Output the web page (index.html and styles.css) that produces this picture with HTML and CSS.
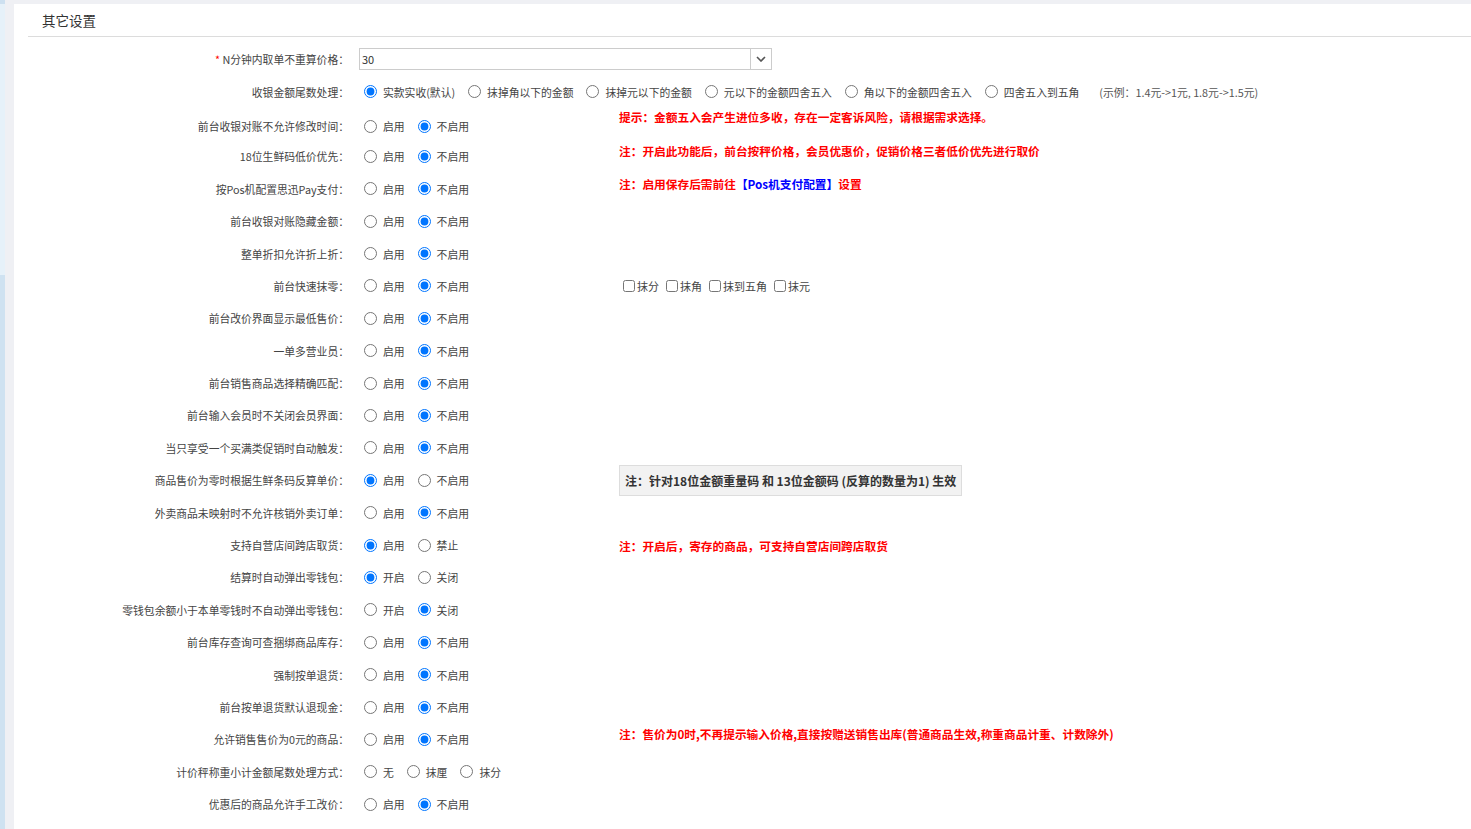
FILE: index.html
```html
<!DOCTYPE html>
<html lang="zh-CN">
<head>
    <meta charset="UTF-8">
    <meta name="viewport" content="width=device-width, initial-scale=1.0">
    <title>其它设置</title>
    <link rel="stylesheet" href="styles.css">
</head>
<body>
    <div class="layout">
        <div class="rail"></div>
        <div class="main">
            <div class="panel">
                <div class="panel-title">其它设置</div>

                <div class="form">
                    <div class="row">
                        <div class="label"><span class="star">*</span> N分钟内取单不重算价格：</div>
                        <div class="field wide">
                            <div class="select">
                                <input type="text" value="30">
                                <span class="arrow">
                                    <svg width="10" height="6" viewBox="0 0 10 6"><path d="M1 1 L5 5 L9 1" fill="none" stroke="#555" stroke-width="1.6"/></svg>
                                </span>
                            </div>
                        </div>
                    </div>

                    <div class="row">
                        <div class="label">收银金额尾数处理：</div>
                        <div class="field wide">
                            <label class="opt"><input type="radio" name="tail" checked>实款实收(默认)</label>
                            <label class="opt"><input type="radio" name="tail">抹掉角以下的金额</label>
                            <label class="opt"><input type="radio" name="tail">抹掉元以下的金额</label>
                            <label class="opt"><input type="radio" name="tail">元以下的金额四舍五入</label>
                            <label class="opt"><input type="radio" name="tail">角以下的金额四舍五入</label>
                            <label class="opt"><input type="radio" name="tail">四舍五入到五角</label>
                            <span class="sample">(示例：1.4元-&gt;1元, 1.8元-&gt;1.5元)</span>
                        </div>
                    </div>

                    <div class="row">
                        <div class="label">前台收银对账不允许修改时间：</div>
                        <div class="field">
                            <label class="opt"><input type="radio" name="r3">启用</label>
                            <label class="opt"><input type="radio" name="r3" checked>不启用</label>
                        </div>
                        <div class="note warn up-lg">提示：金额五入会产生进位多收，存在一定客诉风险，请根据需求选择。</div>
                    </div>

                    <div class="row">
                        <div class="label">18位生鲜码低价优先：</div>
                        <div class="field">
                            <label class="opt"><input type="radio" name="r4">启用</label>
                            <label class="opt"><input type="radio" name="r4" checked>不启用</label>
                        </div>
                        <div class="note warn up">注：开启此功能后，前台按秤价格，会员优惠价，促销价格三者低价优先进行取价</div>
                    </div>

                    <div class="row">
                        <div class="label">按Pos机配置思迅Pay支付：</div>
                        <div class="field">
                            <label class="opt"><input type="radio" name="r5">启用</label>
                            <label class="opt"><input type="radio" name="r5" checked>不启用</label>
                        </div>
                        <div class="note warn up">注：启用保存后需前往<span class="link">【Pos机支付配置】</span>设置</div>
                    </div>

                    <div class="row">
                        <div class="label">前台收银对账隐藏金额：</div>
                        <div class="field">
                            <label class="opt"><input type="radio" name="r6">启用</label>
                            <label class="opt"><input type="radio" name="r6" checked>不启用</label>
                        </div>
                    </div>

                    <div class="row">
                        <div class="label">整单折扣允许折上折：</div>
                        <div class="field">
                            <label class="opt"><input type="radio" name="r7">启用</label>
                            <label class="opt"><input type="radio" name="r7" checked>不启用</label>
                        </div>
                    </div>

                    <div class="row">
                        <div class="label">前台快速抹零：</div>
                        <div class="field">
                            <label class="opt"><input type="radio" name="r8">启用</label>
                            <label class="opt"><input type="radio" name="r8" checked>不启用</label>
                        </div>
                        <div class="note checks">
                            <label class="chk"><input type="checkbox">抹分</label>
                            <label class="chk"><input type="checkbox">抹角</label>
                            <label class="chk"><input type="checkbox">抹到五角</label>
                            <label class="chk"><input type="checkbox">抹元</label>
                        </div>
                    </div>

                    <div class="row">
                        <div class="label">前台改价界面显示最低售价：</div>
                        <div class="field">
                            <label class="opt"><input type="radio" name="r9">启用</label>
                            <label class="opt"><input type="radio" name="r9" checked>不启用</label>
                        </div>
                    </div>

                    <div class="row">
                        <div class="label">一单多营业员：</div>
                        <div class="field">
                            <label class="opt"><input type="radio" name="r10">启用</label>
                            <label class="opt"><input type="radio" name="r10" checked>不启用</label>
                        </div>
                    </div>

                    <div class="row">
                        <div class="label">前台销售商品选择精确匹配：</div>
                        <div class="field">
                            <label class="opt"><input type="radio" name="r11">启用</label>
                            <label class="opt"><input type="radio" name="r11" checked>不启用</label>
                        </div>
                    </div>

                    <div class="row">
                        <div class="label">前台输入会员时不关闭会员界面：</div>
                        <div class="field">
                            <label class="opt"><input type="radio" name="r12">启用</label>
                            <label class="opt"><input type="radio" name="r12" checked>不启用</label>
                        </div>
                    </div>

                    <div class="row">
                        <div class="label">当只享受一个买满类促销时自动触发：</div>
                        <div class="field">
                            <label class="opt"><input type="radio" name="r13">启用</label>
                            <label class="opt"><input type="radio" name="r13" checked>不启用</label>
                        </div>
                    </div>

                    <div class="row">
                        <div class="label">商品售价为零时根据生鲜条码反算单价：</div>
                        <div class="field">
                            <label class="opt"><input type="radio" name="r14" checked>启用</label>
                            <label class="opt"><input type="radio" name="r14">不启用</label>
                        </div>
                        <div class="note tip-box">注：针对18位金额重量码 和 13位金额码 (反算的数量为1) 生效</div>
                    </div>

                    <div class="row">
                        <div class="label">外卖商品未映射时不允许核销外卖订单：</div>
                        <div class="field">
                            <label class="opt"><input type="radio" name="r15">启用</label>
                            <label class="opt"><input type="radio" name="r15" checked>不启用</label>
                        </div>
                    </div>

                    <div class="row">
                        <div class="label">支持自营店间跨店取货：</div>
                        <div class="field">
                            <label class="opt"><input type="radio" name="r16" checked>启用</label>
                            <label class="opt"><input type="radio" name="r16">禁止</label>
                        </div>
                        <div class="note warn">注：开启后，寄存的商品，可支持自营店间跨店取货</div>
                    </div>

                    <div class="row">
                        <div class="label">结算时自动弹出零钱包：</div>
                        <div class="field">
                            <label class="opt"><input type="radio" name="r17" checked>开启</label>
                            <label class="opt"><input type="radio" name="r17">关闭</label>
                        </div>
                    </div>

                    <div class="row">
                        <div class="label">零钱包余额小于本单零钱时不自动弹出零钱包：</div>
                        <div class="field">
                            <label class="opt"><input type="radio" name="r18">开启</label>
                            <label class="opt"><input type="radio" name="r18" checked>关闭</label>
                        </div>
                    </div>

                    <div class="row">
                        <div class="label">前台库存查询可查捆绑商品库存：</div>
                        <div class="field">
                            <label class="opt"><input type="radio" name="r19">启用</label>
                            <label class="opt"><input type="radio" name="r19" checked>不启用</label>
                        </div>
                    </div>

                    <div class="row">
                        <div class="label">强制按单退货：</div>
                        <div class="field">
                            <label class="opt"><input type="radio" name="r20">启用</label>
                            <label class="opt"><input type="radio" name="r20" checked>不启用</label>
                        </div>
                    </div>

                    <div class="row">
                        <div class="label">前台按单退货默认退现金：</div>
                        <div class="field">
                            <label class="opt"><input type="radio" name="r21">启用</label>
                            <label class="opt"><input type="radio" name="r21" checked>不启用</label>
                        </div>
                    </div>

                    <div class="row">
                        <div class="label">允许销售售价为0元的商品：</div>
                        <div class="field">
                            <label class="opt"><input type="radio" name="r22">启用</label>
                            <label class="opt"><input type="radio" name="r22" checked>不启用</label>
                        </div>
                        <div class="note warn up">注：售价为0时,不再提示输入价格,直接按赠送销售出库(普通商品生效,称重商品计重、计数除外)</div>
                    </div>

                    <div class="row">
                        <div class="label">计价秤称重小计金额尾数处理方式：</div>
                        <div class="field">
                            <label class="opt"><input type="radio" name="r23">无</label>
                            <label class="opt"><input type="radio" name="r23">抹厘</label>
                            <label class="opt"><input type="radio" name="r23">抹分</label>
                        </div>
                    </div>

                    <div class="row">
                        <div class="label">优惠后的商品允许手工改价：</div>
                        <div class="field">
                            <label class="opt"><input type="radio" name="r24">启用</label>
                            <label class="opt"><input type="radio" name="r24" checked>不启用</label>
                        </div>
                    </div>
                </div>
            </div>
        </div>
    </div>
</body>
</html>
```

FILE: styles.css
```css
* {
    box-sizing: border-box;
}

html, body {
    height: 100%;
}

body {
    margin: 0;
    font-family: "Noto Sans CJK SC", "Noto Sans", sans-serif;
    color: #444;
    background-color: #eff0f4;
    overflow: hidden;
}

.layout {
    display: flex;
    height: 100%;
}

.rail {
    width: 5px;
    flex-shrink: 0;
    background: linear-gradient(#cde0f0 0, #cde0f0 4px, #e6f1f9 4px, #e6f1f9 275px, #cfe2f1 275px);
}

.main {
    flex: 1;
    padding: 4px 0 0 9px;
}

.panel {
    background-color: #fff;
    height: 100%;
    padding-left: 14px;
}

.panel-title {
    height: 33px;
    line-height: 33px;
    padding-left: 14px;
    font-size: 13.5px;
    color: #333;
    border-bottom: 1px solid #dcdcdc;
}

.form {
    padding-top: 6px;
}

/* label | options | note */
.row {
    display: grid;
    grid-template-columns: 321px 247px 1fr;
    column-gap: 10px;
    align-items: center;
    height: 32.4px;
}

.label {
    text-align: right;
    font-size: 10.8px;
    white-space: nowrap;
}

.star {
    color: #f00;
}

.field {
    display: flex;
    align-items: center;
    font-size: 10.8px;
    white-space: nowrap;
}

.field.wide {
    grid-column: 2 / 4;
}

.opt {
    display: inline-flex;
    align-items: center;
    margin-right: 8px;
    cursor: pointer;
}

.opt input {
    width: 13px;
    height: 13px;
    margin: 0 6px 0 5px;
}

.sample {
    margin-left: 12px;
    color: #555;
}

.select {
    display: flex;
    width: 413px;
    height: 22px;
    border: 1px solid #ccc;
}

.select input {
    flex: 1;
    border: none;
    outline: none;
    padding: 0 2px;
    font-family: inherit;
    font-size: 11px;
    color: #333;
}

.select .arrow {
    width: 21px;
    border-left: 1px solid #ccc;
    display: flex;
    align-items: center;
    justify-content: center;
}

.note {
    margin-left: 3px;
    white-space: nowrap;
}

.warn {
    font-size: 11.7px;
    font-weight: bold;
    color: #f00;
}

.warn.up {
    margin-bottom: 11px;
}

.warn.up-lg {
    margin-bottom: 20px;
}

.link {
    color: #00f;
}

.checks {
    display: flex;
    align-items: center;
    font-size: 11px;
}

.chk {
    display: inline-flex;
    align-items: center;
    margin-right: 3px;
}

.chk input {
    width: 12px;
    height: 12px;
    margin: 0 2px 0 4px;
}

.tip-box {
    justify-self: start;
    height: 31px;
    line-height: 29px;
    padding: 0 5px;
    background-color: #f2f2f2;
    border: 1px solid #ddd;
    font-size: 12px;
    font-weight: bold;
    color: #333;
}
```
